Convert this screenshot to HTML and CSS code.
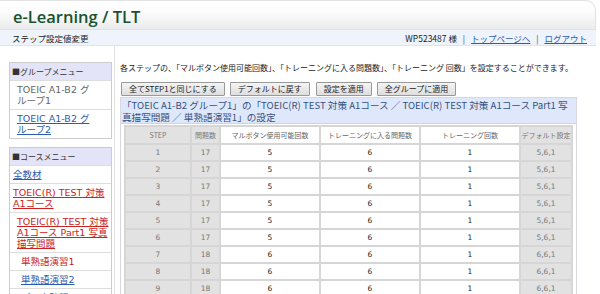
FILE: index.html
```html
<!DOCTYPE html>
<html lang="ja">
<head>
  <meta charset="UTF-8" />
  <title>ステップ設定値変更 - e-Learning / TLT</title>
  <link rel="stylesheet" href="styles.css">
</head>
<body>
  <div class="page">
    <header class="site-header">
      <h1>e-Learning / TLT</h1>
    </header>
    <div class="subbar">
      <span class="page-name">ステップ設定値変更</span>
      <span class="user">WP523487 様 <span class="sep">|</span> <a href="#">トップページへ</a> <span class="sep">|</span> <a href="#">ログアウト</a></span>
    </div>

    <div class="layout">
      <aside class="sidebar">
        <div class="menu group-menu">
          <div class="menu-title">■グループメニュー</div>
          <div class="menu-item current">TOEIC A1-B2 グループ1</div>
          <div class="menu-item"><a href="#">TOEIC A1-B2 グループ2</a></div>
        </div>
        <div class="menu">
          <div class="menu-title">■コースメニュー</div>
          <div class="menu-item"><a href="#">全教材</a></div>
          <div class="menu-item"><a href="#" class="active">TOEIC(R) TEST 対策 A1コース</a></div>
          <div class="menu-item lv2"><a href="#" class="active">TOEIC(R) TEST 対策 A1コース Part1 写真描写問題</a></div>
          <div class="menu-item lv3 selected">単熟語演習1</div>
          <div class="menu-item lv3"><a href="#">単熟語演習2</a></div>
          <div class="menu-item lv3"><a href="#">データ確認テスト1</a></div>
        </div>
      </aside>

      <main class="main">
        <p class="lead">各ステップの、「マルボタン使用可能回数」、「トレーニングに入る問題数」、「トレーニング 回数」を設定することができます。</p>
        <div class="actions">
          <button>全てSTEP1と同じにする</button>
          <button>デフォルトに戻す</button>
          <button class="wide-gap">設定を適用</button>
          <button>全グループに適用</button>
        </div>

        <div class="setting">
          <div class="setting-title">「TOEIC A1-B2 グループ1」の「TOEIC(R) TEST 対策 A1コース ／ TOEIC(R) TEST 対策 A1コース Part1 写真描写問題 ／ 単熟語演習1」の設定</div>
          <div class="setting-body">
            <table class="steps">
              <colgroup>
                <col class="c-step"><col class="c-num"><col class="c-val">
                <col class="c-val"><col class="c-val"><col class="c-def">
              </colgroup>
              <thead>
                <tr>
                  <th class="gray">STEP</th>
                  <th class="gray">問題数</th>
                  <th>マルボタン使用可能回数</th>
                  <th>トレーニングに入る問題数</th>
                  <th>トレーニング回数</th>
                  <th class="gray">デフォルト設定</th>
                </tr>
              </thead>
              <tbody id="rows"></tbody>
            </table>
          </div>
        </div>
      </main>
    </div>
  </div>

  <script>
    const steps = [
      [1, 17, 5, 6, 1, "5,6,1"],
      [2, 17, 5, 6, 1, "5,6,1"],
      [3, 17, 5, 6, 1, "5,6,1"],
      [4, 17, 5, 6, 1, "5,6,1"],
      [5, 17, 5, 6, 1, "5,6,1"],
      [6, 17, 5, 6, 1, "5,6,1"],
      [7, 18, 6, 6, 1, "6,6,1"],
      [8, 18, 6, 6, 1, "6,6,1"],
      [9, 18, 6, 6, 1, "6,6,1"]
    ];

    const tbody = document.getElementById("rows");
    steps.forEach(s => {
      const tr = document.createElement("tr");
      tr.innerHTML = `
        <td class="gray">${s[0]}</td>
        <td class="gray">${s[1]}</td>
        <td>${s[2]}</td>
        <td>${s[3]}</td>
        <td>${s[4]}</td>
        <td class="gray">${s[5]}</td>
      `;
      tbody.appendChild(tr);
    });
  </script>
</body>
</html>
```

FILE: styles.css
```css
body {
  margin: 0;
  background: #fff;
  color: #333;
  font-family: "Noto Sans CJK JP", "Noto Sans", sans-serif;
}
a { color: #2a5db0; }
.page { margin-right: 4px; }

.site-header {
  height: 30px;
  background: linear-gradient(#fff, #fcfcfc 40%, #ebebeb);
  border: 1px solid #e2e2e2;
  border-left: none;
  border-top-right-radius: 10px;
  box-sizing: border-box;
}
.site-header h1 {
  margin: 0;
  padding: 6px 0 0 13px;
  font-family: "Open Sans", sans-serif;
  font-weight: 600;
  font-size: 16.5px;
  line-height: 20px;
  color: #17532f;
}

.subbar {
  display: flex;
  justify-content: space-between;
  align-items: center;
  height: 15px;
  padding: 0 9px 0 12px;
  background: #eef3fc;
  border-bottom: 1px solid #dfe3ea;
  font-size: 8.5px;
  color: #222;
}
.subbar .sep { margin: 0 4px; color: #444; }

.layout {
  display: flex;
  align-items: flex-start;
  padding-top: 16px;
}

.sidebar {
  width: 103px;
  margin-left: 9px;
  flex: none;
}
.menu {
  border: 1px solid #ccc;
  margin-bottom: 8px;
  font-family: "DejaVu Sans", "Noto Sans CJK JP", sans-serif;
  font-size: 9.5px;
  line-height: 11px;
}
.menu-title {
  background: #e4e4f8;
  color: #333;
  padding: 2px;
  height: 13px;
  font-family: "Noto Sans CJK JP", sans-serif;
  font-size: 8px;
  line-height: 13px;
}
.menu-item {
  border-top: 1px solid #ddd;
  padding: 3px 2px 3px 3px;
}
.group-menu .menu-item { padding: 3px 15px 3px 7px; }
.menu-item.current { color: #666; }
.menu-item a { color: #2a5db0; }
.menu-item a.active { color: #cc2222; }
.menu-item.lv2 { padding-left: 7px; padding-right: 1px; }
.menu-item.lv3 { padding-left: 11px; }
.menu-item.selected { color: #cc2222; }

.main {
  flex: 1;
  margin-left: 2px;
  margin-top: -16px;
  padding: 16px 0 0 5px;
  border-left: 1px solid #e3e3e3;
  min-height: 260px;
  max-width: 457px;
}
.lead {
  margin: 0;
  font-size: 8px;
  line-height: 12px;
  color: #222;
  white-space: nowrap;
}
.actions {
  display: flex;
  gap: 5px;
  margin: 8px 0 1px 1px;
}
.actions button {
  height: 14px;
  padding: 0 7px;
  border: 1px solid #999;
  border-radius: 1px;
  background: linear-gradient(#f4f4f4, #dedede);
  font-family: inherit;
  font-size: 8px;
  line-height: 12px;
  color: #222;
}
.actions .wide-gap { margin-left: 1px; }

.setting {
  border: 1px solid #d6d9e0;
}
.setting-title {
  background: #dfe8fb;
  color: #34517e;
  font-size: 9.6px;
  line-height: 12px;
  padding: 1px 1px 0 1px;
  border-bottom: 1px solid #cdd5e4;
}
.setting-body {
  padding: 1px 3px 0 3px;
}

.steps {
  border-collapse: collapse;
  table-layout: fixed;
  width: 447px;
  font-family: "DejaVu Sans", sans-serif;
  font-size: 7.5px;
}
.c-step { width: 66px; }
.c-num { width: 29px; }
.c-val { width: 100px; }
.c-def { width: 52px; }
.steps th, .steps td {
  border: 2px solid #d6d6d6;
  height: 13px;
  padding: 1px 0;
  text-align: center;
  color: #222;
}
.steps th {
  font-family: "Noto Sans CJK JP", sans-serif;
  font-weight: normal;
  font-size: 7px;
  color: #666;
  height: 14px;
}
.steps .gray {
  background: #e2e2e2;
  color: #777;
}
```
